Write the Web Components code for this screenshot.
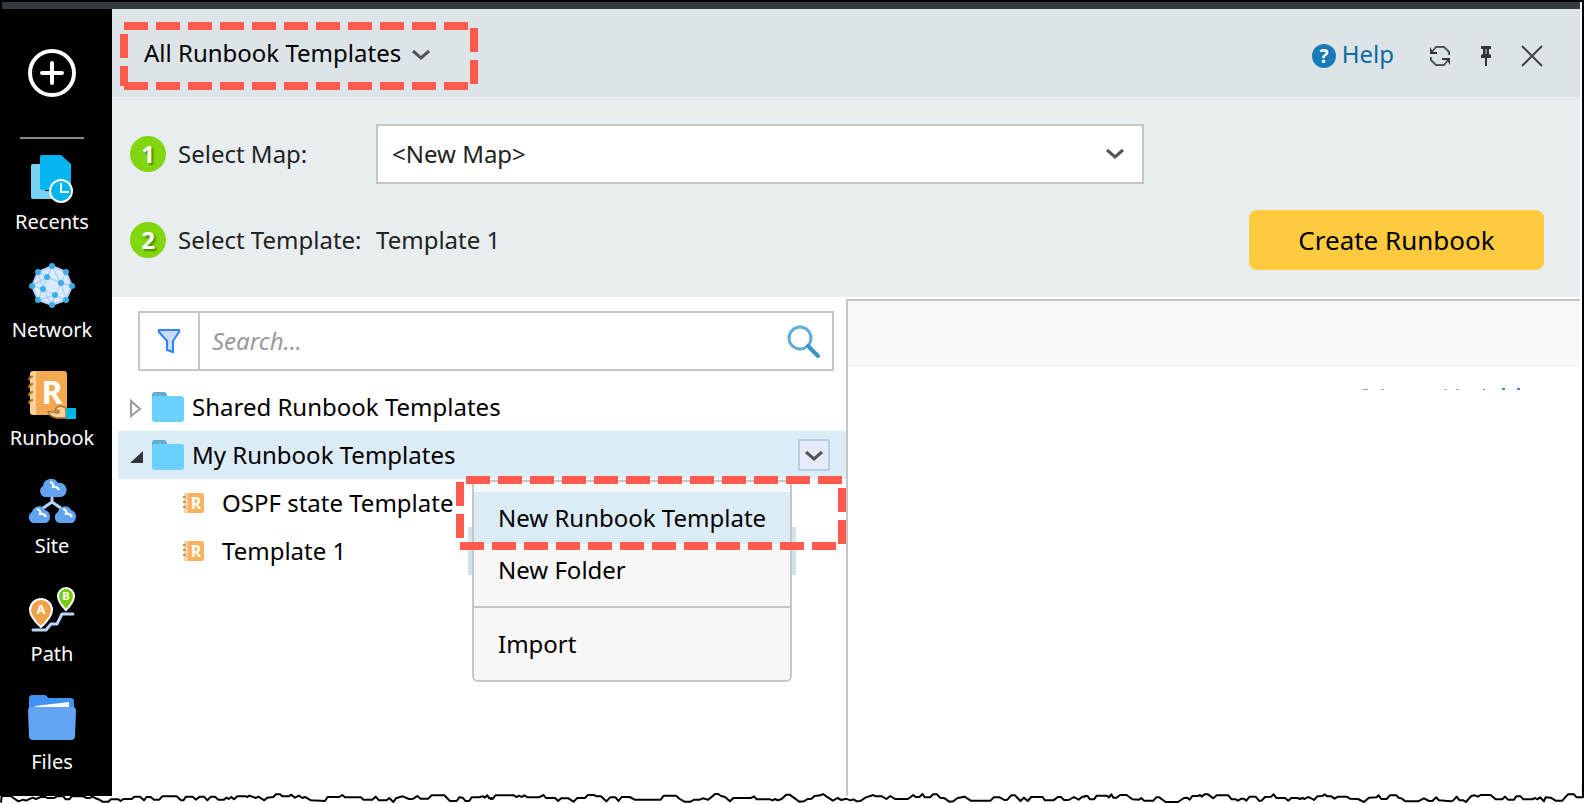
<!DOCTYPE html>
<html lang="en">
<head>
<meta charset="utf-8">
<title>All Runbook Templates</title>
<style>
  body { margin: 0; background: #fff; font-family: "Noto Sans", "Open Sans", sans-serif; font-size: 24px; line-height: 32px; color: #000; }
</style>
</head>
<body>
<runbook-app></runbook-app>

<script>
const ICONS = {
  plus: [48, 48, `<circle cx="24" cy="24" r="22" fill="none" stroke="#fff" stroke-width="4"/><path d="M24 14v20M14 24h20" stroke="#fff" stroke-width="4" stroke-linecap="round"/>`],
  recents: [48, 48, `<path d="M5 10h12v27h14v8H5a2 2 0 0 1-2-2V12a2 2 0 0 1 2-2z" fill="#7ad2f3"/><path d="M14 1h19l10 9v24a2 2 0 0 1-2 2H14a2 2 0 0 1-2-2V3a2 2 0 0 1 2-2z" fill="#03b5f1"/><circle cx="33" cy="37" r="11" fill="#03b5f1" stroke="#fff" stroke-width="2"/><path d="M33 29v9h8" fill="none" stroke="#fff" stroke-width="2"/>`],
  network: [48, 48, `<path d="M24 4 38 10 44 24 38 38 24 43 10 38 4 24 10 10z" fill="#d8ecfd" stroke="#b3d0fb" stroke-width="2"/><path d="M24 4 19 15 10 10M19 15l14 6 5-11M24 4l9 17 11 3M33 21l5 17M33 21l-6 12 11 5M27 33l-3 10M27 33l-12-6-5 11 17-5M15 27 4 24M15 27l4-12L4 24M10 10l5 17M24 4l14 6M15 27l9 16" fill="none" stroke="#b3d0fb" stroke-width="1.500"/><path d="M20 17 32 22 27 32 17 28z" fill="#d8ecfd"/><g fill="#3daee5"><circle cx="24" cy="4" r="3"/><circle cx="38" cy="10" r="3"/><circle cx="44" cy="24" r="3"/><circle cx="38" cy="38" r="3"/><circle cx="24" cy="43" r="3"/><circle cx="10" cy="38" r="3"/><circle cx="4" cy="24" r="3"/><circle cx="10" cy="10" r="3"/><circle cx="19" cy="15" r="3"/><circle cx="33" cy="21" r="3"/><circle cx="27" cy="33" r="3"/><circle cx="15" cy="27" r="3"/></g>`],
  runbook: [48, 48, `<rect x="2" y="1" width="12" height="44" rx="3" fill="#fbd09a"/><path d="M8 1h28a3 3 0 0 1 3 3v38a3 3 0 0 1-3 3H8z" fill="#f3a950"/><path d="M5 6.500q-4 0-4 4M5 14q-4 0-4 4M5 22q-4 0-4 4M5 30q-4 0-4 4" fill="none" stroke="#a97410" stroke-width="2"/><text x="24" y="34" text-anchor="middle" font-family="Noto Sans" font-weight="700" font-size="32" fill="#fff">R</text><path d="M38 38v10H29q-7-1-9-6 4-1 9 1 3 0 2-2l-4-1q2-4 6-4z" fill="#fbd09a" stroke="#a9783a" stroke-width="1.500"/><path d="M38 38h10v11H38z" fill="#02b7e4"/>`],
  site: [48, 48, `<path d="M24 18v6L11 33M24 24l13 9" fill="none" stroke="#b9d6fa" stroke-width="3"/><g fill="#62a3f2"><path d="M17 19a6 6 0 0 1-2-11A8 8 0 0 1 30 5a7 7 0 0 1 3 14z"/><path d="M5 45a6 6 0 0 1-1-11 7 7 0 0 1 13-2 7 7 0 0 1 1 13zM31 45a6 6 0 0 1-1-11 7 7 0 0 1 13-2 7 7 0 0 1 1 13z"/></g><path d="M22 4q4 1 3 5 4-1 6 3M9 31q4 1 3 5 4-1 6 3M35 31q4 1 3 5 4-1 6 3" fill="none" stroke="#fff" stroke-width="2"/>`],
  path: [48, 48, `<path d="M5 44h13l5-6h6l5-10h11" fill="none" stroke="#b9d6fa" stroke-width="3" stroke-linecap="round" stroke-linejoin="round"/><path d="M13 41Q2 31 2 24a11 11 0 0 1 22 0q0 7-11 17z" fill="#f0a24b" stroke="#fff" stroke-width="2"/><path d="M38 24Q30 16 30 10a8 8 0 0 1 16 0q0 6-8 14z" fill="#76cb10" stroke="#fff" stroke-width="2"/><g font-family="Noto Sans" font-weight="700" fill="#fff" text-anchor="middle"><text x="13" y="28" font-size="13">A</text><text x="38" y="14" font-size="11">B</text></g>`],
  files: [48, 48, `<path d="M4 1h12q3 0 4 3h23q3 0 3 4v12H1V5q0-4 3-4z" fill="#4093f2"/><path d="M7 12 41 8v10H7z" fill="#fff"/><path d="M3 13h42q3 0 3 4l-1 25q0 4-4 4H5q-4 0-4-4L0 17q0-4 3-4z" fill="#62a5f3"/>`],
  chevron: [20, 12, `<path d="M2 2l8 7 8-7" fill="none" stroke="#555" stroke-width="3"/>`],
  help: [24, 24, `<circle cx="12" cy="12" r="12" fill="#187bb8"/><text x="12" y="19" text-anchor="middle" font-family="Noto Sans" font-weight="700" font-size="19" fill="#fff">?</text>`],
  refresh: [20, 20, `<path d="M2 6 6 1h8l5 5v3M1 11v3l5 5h8l4-5" fill="none" stroke="#555" stroke-width="2"/><path d="M0 1v7h7V6H3zM20 19v-7h-8v2h5z" fill="#333"/>`],
  pin: [12, 20, `<path d="M1 0h10v3H9v5l2 1v3H7v8H5v-8H1V9l2-1V3H1z" fill="#333"/><path d="M6 3v5" stroke="#cfd6da" stroke-width="1"/>`],
  close: [20, 20, `<path d="M0 0l20 20M20 0L0 20" stroke="#444" stroke-width="2"/>`],
  filter: [24, 24, `<path d="M2 1h20v2l-6 9v11l-6-2v-9L2 3z" fill="#c7dcfa" stroke="#2f82fb" stroke-width="2"/>`],
  search: [32, 32, `<circle cx="12" cy="12" r="11" fill="none" stroke="#62abd6" stroke-width="3"/><path d="M20 20l10 10" stroke="#3a93c5" stroke-width="4" stroke-linecap="round"/>`],
  folder: [32, 30, `<path d="M3 0h9q3 0 3 4v8H0V3q0-3 3-3z" fill="#62acd0"/><path d="M0 7q0-3 3-3h26q3 0 3 3v20q0 3-3 3H3q-3 0-3-3z" fill="#6dd0fb"/>`],
  closed: [14, 18, `<path d="M1 1v15l9-7z" fill="#fff" stroke="#999" stroke-width="2"/>`],
  open: [14, 14, `<path d="M13 1v12H0z" fill="#333"/>`],
  template: [22, 20, `<rect x="2" y="0" width="20" height="20" rx="2" fill="#f6b25f"/><rect x="2" y="0" width="4" height="20" rx="1" fill="#fbd3a2"/><path d="M1 4h3M1 9h3M1 14h3" stroke="#c09a5a" stroke-width="2"/><text x="14" y="16" text-anchor="middle" font-family="Noto Sans" font-weight="700" font-size="16" fill="#fff">R</text>`]
};

function define(name, html, setup) {
  const template = document.createElement('template');
  template.innerHTML = html;
  customElements.define(name, class extends HTMLElement {
    constructor() {
      super();
      this.attachShadow({ mode: 'open' }).append(template.content.cloneNode(true));
    }
    connectedCallback() { if (setup) setup.call(this, this.shadowRoot); }
  });
}

define('app-icon', `<style>:host{display:inline-flex;flex:none}svg{display:block;overflow:visible}</style><svg aria-hidden="true"></svg>`, function (root) {
  const [w, h, art] = ICONS[this.getAttribute('name')];
  const svg = root.querySelector('svg');
  svg.setAttribute('width', w);
  svg.setAttribute('height', h);
  svg.setAttribute('viewBox', `0 0 ${w} ${h}`);
  svg.innerHTML = art;
});

define('nav-item', `
<style>
  :host { display: block; }
  a { display: flex; flex-direction: column; align-items: center; gap: 6px; color: #fff; text-decoration: none; font-size: 20px; line-height: 28px; }
</style>
<a href="#"><span><slot></slot></span></a>`, function (root) {
  const icon = document.createElement('app-icon');
  icon.setAttribute('name', this.getAttribute('icon'));
  root.querySelector('a').prepend(icon);
});

define('side-nav', `
<style>
  :host { display: block; background: #000; box-sizing: border-box; padding: 40px 10px 0 0; }
  button { display: block; margin: 0 auto; padding: 0; border: 0; background: none; }
  button app-icon { display: flex; }
  hr { width: 64px; height: 2px; margin: 40px auto 15px; border: 0; background: #838b91; }
  nav { display: flex; flex-direction: column; gap: 26px; }
</style>
<button aria-label="New"><app-icon name="plus"></app-icon></button>
<hr>
<nav>
  <nav-item icon="recents">Recents</nav-item>
  <nav-item icon="network">Network</nav-item>
  <nav-item icon="runbook">Runbook</nav-item>
  <nav-item icon="site">Site</nav-item>
  <nav-item icon="path">Path</nav-item>
  <nav-item icon="files">Files</nav-item>
</nav>`);

/* Dashed highlight drawn over the control it surrounds. */
define('callout-frame', `
<style>:host{position:absolute;pointer-events:none;z-index:3}svg{display:block}</style>
<svg aria-hidden="true"><path fill="none" stroke="#ff5a4c" stroke-width="8" stroke-dasharray="24 8"/></svg>`, function (root) {
  const w = +this.getAttribute('width'), h = +this.getAttribute('height');
  const svg = root.querySelector('svg'), path = root.querySelector('path');
  svg.setAttribute('width', w);
  svg.setAttribute('height', h);
  path.setAttribute('d', `M4 ${h - 4}V4H${w - 4}V${h - 4}H4`);
  path.setAttribute('stroke-dashoffset', this.getAttribute('phase'));
});

define('panel-header', `
<style>
  :host { display: flex; align-items: center; height: 88px; background: #dde4e8; box-sizing: border-box; padding: 6px 38px 0 8px; }
  .picker { position: relative; height: 68px; }
  .title { display: flex; align-items: center; gap: 10px; height: 62px; margin: 0; padding: 0 24px; border: 0; background: none; font: inherit; color: inherit; }
  .title app-icon { padding-top: 4px; }
  .tools { display: flex; align-items: center; margin-left: auto; }
  a { display: flex; align-items: center; gap: 6px; color: #0f6aa0; text-decoration: none; margin-right: 36px; }
  a span { padding-bottom: 4px; }
  .tools button { display: flex; padding: 0; border: 0; background: none; margin-right: 30px; }
  .tools button:last-child { margin-right: 0; }
  callout-frame { top: 0; left: 0; }
</style>
<div class="picker">
  <button class="title">All Runbook Templates <app-icon name="chevron"></app-icon></button>
  <callout-frame width="358" height="68" phase="4"></callout-frame>
</div>
<div class="tools">
  <a href="#"><app-icon name="help"></app-icon><span>Help</span></a>
  <button aria-label="Refresh"><app-icon name="refresh"></app-icon></button>
  <button aria-label="Pin"><app-icon name="pin"></app-icon></button>
  <button aria-label="Close"><app-icon name="close"></app-icon></button>
</div>`);

define('step-row', `
<style>
  :host { display: flex; align-items: center; height: 60px; color: #222; }
  .badge { flex: none; width: 36px; height: 36px; border-radius: 50%; background: #82d60e; color: #fff; font-weight: 700; line-height: 36px; text-align: center; text-shadow: 2px 2px 2px #4a8a00; margin-right: 12px; }
  .label { flex: none; width: 198px; white-space: nowrap; }
</style>
<span class="badge"><slot name="number"></slot></span><span class="label"><slot name="label"></slot></span><slot></slot>`);

define('map-form', `
<style>
  :host { display: flex; flex-direction: column; gap: 26px; background: #e8edf0; padding: 27px 36px 27px 18px; }
  .select { position: relative; flex: 1; max-width: 768px; }
  select { appearance: none; display: block; box-sizing: border-box; width: 100%; height: 60px; padding: 0 56px 0 14px; border: 2px solid #c6c6c6; border-radius: 0; background: #fff; font: inherit; color: #222; }
  .select app-icon { position: absolute; right: 19px; top: 24px; pointer-events: none; }
  .create { margin-left: auto; width: 295px; height: 60px; padding: 0; border: 0; border-radius: 8px; background: #ffcb3e; font: inherit; font-size: 26px; color: #000; }
</style>
<step-row>
  <span slot="number">1</span><label slot="label" for="map">Select Map:</label>
  <div class="select"><select id="map"><option>&lt;New Map&gt;</option></select><app-icon name="chevron"></app-icon></div>
</step-row>
<step-row>
  <span slot="number">2</span><span slot="label">Select Template:</span>
  <span>Template 1</span><button class="create">Create Runbook</button>
</step-row>`);

define('search-box', `
<style>
  :host { display: flex; height: 60px; box-sizing: border-box; border: 2px solid #c6c6c6; background: #fff; }
  button { display: flex; align-items: center; justify-content: center; width: 56px; padding: 2px 0 0; border: 0; background: none; }
  .filter { border-right: 2px solid #c6c6c6; width: 60px; padding: 0; }
  input { flex: 1; min-width: 0; padding: 0 12px; border: 0; outline: 0; background: none; font: inherit; }
  input::placeholder { color: #999; font-style: italic; opacity: 1; }
</style>
<button class="filter" aria-label="Filter"><app-icon name="filter"></app-icon></button>
<input type="search" placeholder="Search..." aria-label="Search">
<button aria-label="Search"><app-icon name="search"></app-icon></button>`);

define('tree-row', `
<style>
  :host { display: flex; align-items: center; height: 48px; padding: 0 16px 0 12px; }
  :host([selected]) { background: #dcecf7; }
  :host([level="2"]) { padding-left: 64px; }
  .toggle { display: flex; width: 22px; padding-top: 4px; }
  :host([level="2"]) .toggle { display: none; }
  .text { margin-left: 8px; white-space: nowrap; }
  :host([level="2"]) .text { margin-left: 18px; }
  ::slotted(button) { margin-left: auto; }
</style>
<span class="toggle"><slot name="toggle"></slot></span><slot name="icon"></slot><span class="text"><slot></slot></span><slot name="action"></slot>`);

define('context-menu', `
<style>
  :host { position: absolute; z-index: 2; box-sizing: border-box; width: 320px; padding: 10px 0; border: 2px solid #c6c6c6; border-radius: 6px; background: #f7f7f7; }
  button { display: block; width: 100%; height: 52px; padding: 0 24px; border: 0; background: none; font: inherit; color: #000; text-align: left; white-space: nowrap; }
  .active { background: #dcecf7; }
  hr { height: 2px; margin: 10px 0; border: 0; background: #c6c6c6; }
</style>
<div role="menu">
  <button role="menuitem" class="active">New Runbook Template</button>
  <button role="menuitem">New Folder</button>
  <hr>
  <button role="menuitem">Import</button>
</div>`);

define('template-tree', `
<style>
  :host { display: block; position: relative; }
  .more { display: flex; align-items: center; justify-content: center; box-sizing: border-box; width: 32px; height: 32px; padding: 2px 0 0; border: 2px solid #b9cde7; border-radius: 2px; background: #e4ecf9; }
  .shade { position: absolute; left: 350px; top: 144px; width: 328px; height: 48px; background: #cfe4ef; }
  context-menu { left: 354px; top: 97px; }
  callout-frame { left: 338px; top: 93px; }
</style>
<tree-row><app-icon slot="toggle" name="closed"></app-icon><app-icon slot="icon" name="folder"></app-icon>Shared Runbook Templates</tree-row>
<tree-row selected><app-icon slot="toggle" name="open"></app-icon><app-icon slot="icon" name="folder"></app-icon>My Runbook Templates<button slot="action" class="more" aria-label="More actions"><app-icon name="chevron"></app-icon></button></tree-row>
<tree-row level="2"><app-icon slot="icon" name="template"></app-icon>OSPF state Template</tree-row>
<tree-row level="2"><app-icon slot="icon" name="template"></app-icon>Template 1</tree-row>
<div class="shade"></div>
<context-menu></context-menu>
<callout-frame width="390" height="74" phase="24"></callout-frame>`);

define('preview-pane', `
<style>
  :host { display: block; border: 2px solid #c6c6c6; border-width: 2px 0 0 2px; }
  .bar { height: 66px; background: #f7f8fa; }
  svg { display: block; margin: 20px 56px 0 auto; }
</style>
<div class="bar"></div>
<svg width="164" height="3" shape-rendering="crispEdges" aria-hidden="true"><path d="M2 2h6v1h-6zM21 2h3v1h-3zM84 2h3v1h-3zM96 2h3v1h-3z" fill="#8fb0cf"/><path d="M123 2h2v1h-2zM142 1h3v2h-3zM157 1h3v2h-3z" fill="#4a86be"/></svg>`);

/* Ragged line along the bottom of the page. */
define('torn-edge', `
<style>:host{position:absolute;left:0;right:0;bottom:0;pointer-events:none}svg{display:block;width:100%;height:24px}path{fill:none;stroke:#000;stroke-width:2px;vector-effect:non-scaling-stroke;stroke-linejoin:round}</style>
<svg viewBox="0 0 1584 24" preserveAspectRatio="none" aria-hidden="true">
<path transform="translate(0 -10) scale(.3333)" d="M3 98 5 78 32 78 55 94 70 89 78 92 98 83 108 87 122 81 135 80 142 84 163 84 170 79 190 79 197 88 208 88 215 79 250 79 260 84 270 84 277 79 285 84 300 90 307 95 325 95 333 88 355 88 362 93 370 87 395 87 403 80 420 80 432 91 440 81 452 81 462 89 478 89 487 79 530 79 543 91 550 91 558 80 578 80 587 89 600 80 612 80 622 91 633 80 645 80 655 89 672 89 680 83 686 87 694 81 702 88 712 79 738 79 742 81 748 77 768 84 775 80 793 91 802 83 820 81 828 73 840 73 847 79 867 79 873 74 885 83 897 77 907 84 915 81 933 91 975 93 983 81 1018 81 1027 75 1035 82 1083 82 1090 89 1117 89 1127 80 1137 91 1160 91 1168 84 1180 96 1188 85 1208 79 1227 87 1240 86 1252 78 1262 86 1285 86 1295 76 1333 76 1350 93 1370 93 1378 82 1388 83 1397 93 1408 93 1415 82 1437 82 1450 79 1455 83 1462 76 1468 85 1478 84"/>
<path transform="translate(490 0) scale(.3827 .3333)" d="M0 57 8 56 14 46 62 46 70 51 76 47 82 51 90 46 98 52 128 52 140 45 146 54 170 54 178 63 186 55 205 55 218 65 228 54 248 54 256 45 272 45 278 49 290 49 304 64 314 52 328 52 336 63 344 51 365 51 378 59 446 59 454 47 486 47 496 57 508 65 524 65 534 59 548 59 556 55 570 59 578 52 588 42 596 42 604 48 614 51 627 64 636 54 682 54 690 49 697 58 732 58 738 61 745 57 752 61 762 57 774 44 783 44 808 65 820 64 830 57 840 56 848 48 864 46 870 42 880 50 896 62 908 54 918 60 930 56 942 61 950 58 958 64 968 63 982 52 1002 45 1008 49 1024 49 1036 57 1046 48 1058 57 1092 57 1106 45 1112 51 1122 51 1130 42 1136 52 1150 52 1158 43 1168 43 1176 53 1188 55 1200 65 1210 64 1222 54 1240 50 1256 62 1308 62 1316 52 1332 52 1344 60 1352 59 1362 46 1372 46 1386 63 1395 53 1405 63 1414 51 1444 51 1450 61 1472 61 1484 51 1492 51 1500 60 1512 60 1526 51 1538 59 1548 50 1556 50"/>
<path transform="translate(1084 -10) scale(.3333)" d="M0 78 10 78 18 88 30 88 38 77 68 77 75 82 82 73 88 83 98 83 108 75 128 75 145 88 165 89 172 84 180 92 208 92 217 82 226 82 245 96 282 96 300 84 310 83 317 89 325 78 342 78 348 75 353 80 362 73 372 73 388 85 398 76 433 76 443 88 455 88 462 92 472 86 480 86 487 92 497 80 515 80 525 92 533 92 543 81 562 80 569 73 577 84 603 84 613 92 622 84 640 84 648 87 655 84 662 87 672 81 680 84 690 90 700 79 715 78 722 73 730 79 742 79 752 86 762 80 788 80 798 86 822 87 840 96 855 83 878 82 884 76 892 87 908 87 918 76 937 76 945 84 952 85 965 94 1002 94 1020 85 1035 93 1045 93 1057 82 1065 91 1100 94 1108 91 1118 80 1127 91 1138 91 1146 96 1162 78 1172 76 1182 80 1190 75 1220 75 1235 88 1255 88 1263 80 1272 89 1290 89 1297 79 1310 79 1318 88 1345 88 1353 84 1360 88 1368 82 1380 94 1385 82 1400 83 1415 92 1435 92 1452 73 1470 73 1478 82 1497 82V40"/>
</svg>`);

define('runbook-app', `
<style>
  :host { position: relative; display: flex; flex-direction: column; box-sizing: border-box; min-height: 100vh; padding-bottom: 8px; }
  .frame { flex: 1; display: flex; flex-direction: column; border: 2px solid #000; border-bottom: 0; padding-right: 2px; }
  .strip { height: 7px; background: #353b41; }
  .body { flex: 1; display: grid; grid-template-columns: 110px minmax(0, 1fr); }
  main { display: flex; flex-direction: column; }
  .panes { flex: 1; display: grid; grid-template-columns: 1fr 1fr; padding-top: 2px; }
  .left { padding: 12px 0 0 6px; }
  search-box { margin: 0 12px 12px 20px; }
</style>
<div class="frame">
  <div class="strip"></div>
  <div class="body">
    <side-nav></side-nav>
    <main>
      <panel-header></panel-header>
      <map-form></map-form>
      <div class="panes">
        <div class="left"><search-box></search-box><template-tree></template-tree></div>
        <preview-pane></preview-pane>
      </div>
    </main>
  </div>
</div>
<torn-edge></torn-edge>`);
</script>
</body>
</html>
